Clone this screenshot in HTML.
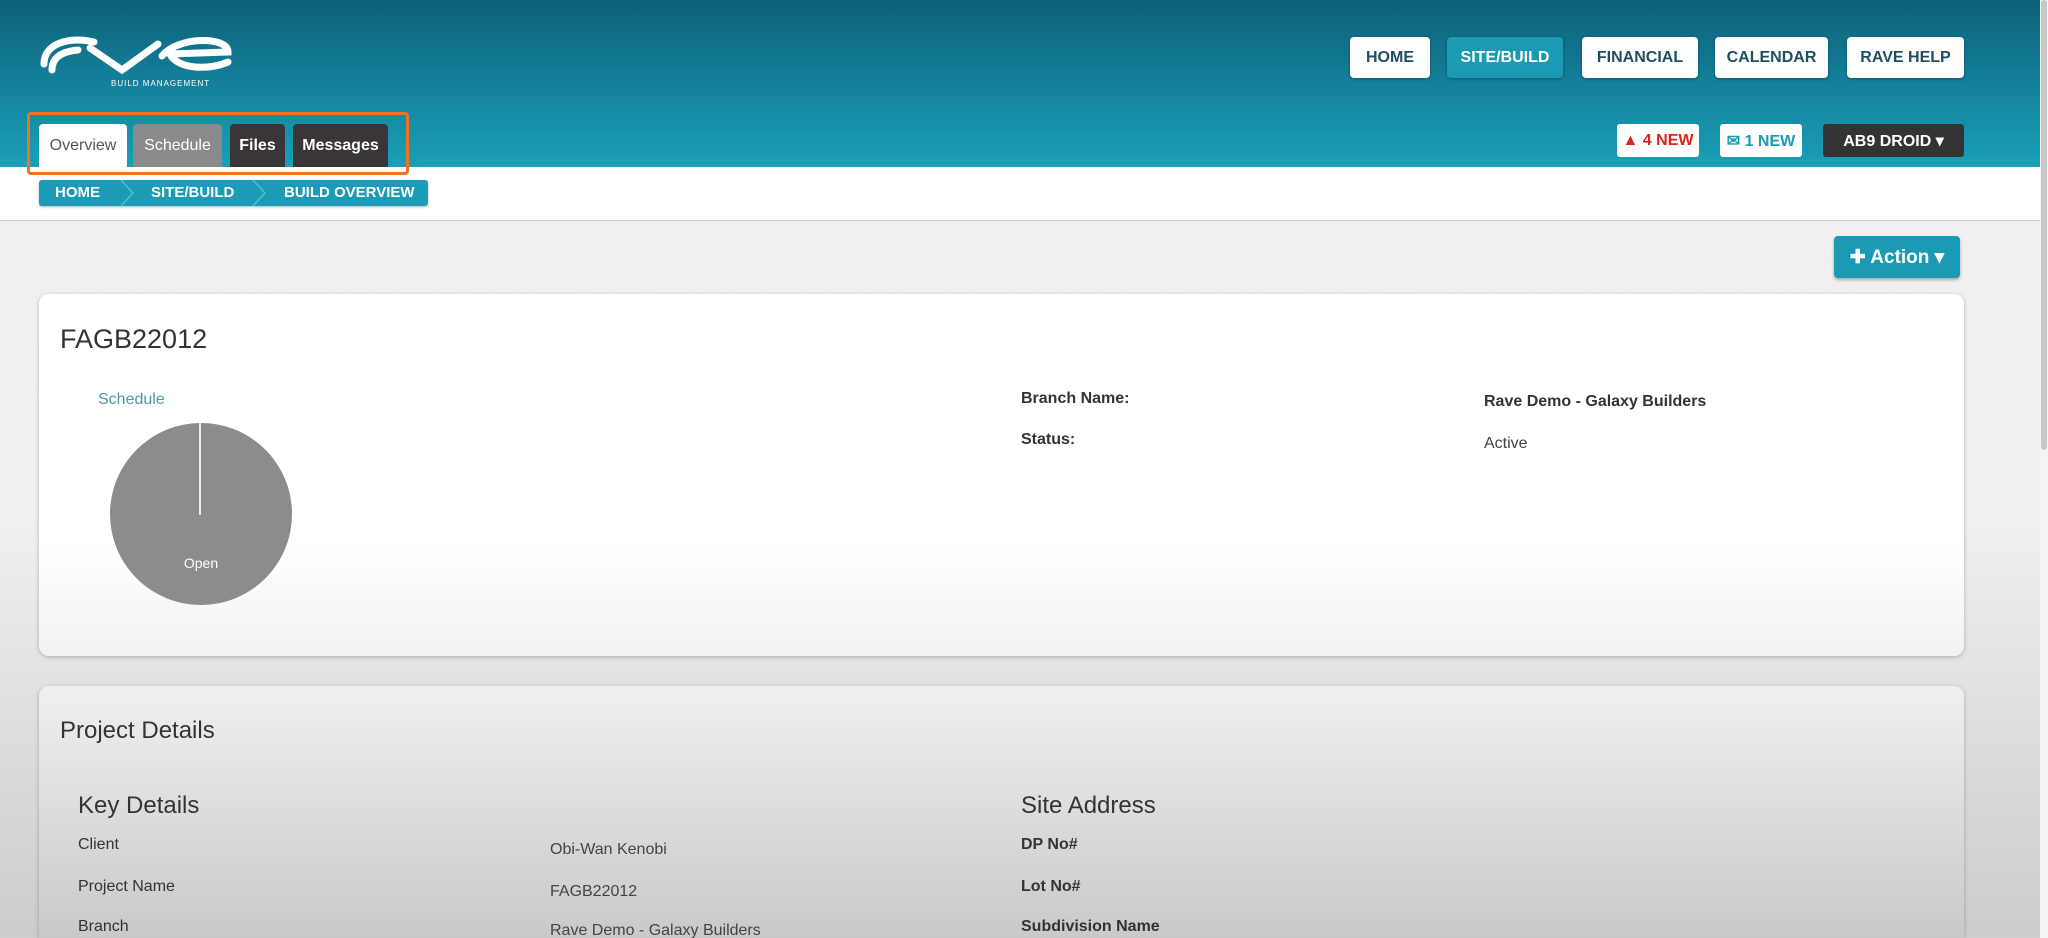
<!DOCTYPE html>
<html style="overflow:hidden"><head><meta charset="utf-8"><style>
*{box-sizing:border-box;margin:0;padding:0}
html,body{width:2048px;height:938px;overflow:hidden}
body{font-family:"Liberation Sans",sans-serif;background:linear-gradient(#f1f1f1 0,#f0f0f0 520px,#cccccc 938px);position:relative}
.abs{position:absolute}
.hdr{left:0;top:0;width:2040px;height:167px;background:linear-gradient(#0e6079 0,#14839d 90px,#1a9fb7 167px)}
.band{left:0;top:167px;width:2040px;height:54px;background:#fff;border-bottom:1px solid #ccc}
.nav{top:37px;height:41px;background:#fff;border-radius:4px;color:#1e4f5c;font-weight:bold;font-size:16px;display:flex;align-items:center;justify-content:center;box-shadow:0 1px 3px rgba(0,0,0,.3)}
.tab{top:124px;height:43px;border-radius:4px 4px 0 0;font-size:16px;display:flex;align-items:center;justify-content:center}
.badge{top:124px;height:33px;border-radius:3px;font-size:16px;font-weight:bold;display:flex;align-items:center;justify-content:center;gap:5px}
.card{left:39px;width:1925px;border-radius:10px;box-shadow:0 1px 4px rgba(0,0,0,.25)}
.t{position:absolute;white-space:nowrap;color:#333}
.b{font-weight:bold}
</style></head><body>
<div class="abs hdr"></div>
<div class="abs band"></div>
<div class="abs" style="right:0;top:0;width:8px;height:938px;background:#f4f4f4"></div>
<div class="abs" style="right:1px;top:0;width:6px;height:450px;background:#c8c8c8;border-radius:3px"></div>
<svg class="abs" style="left:38px;top:30px" width="196" height="60" viewBox="0 0 196 60">
<g fill="none" stroke="#fff" stroke-width="7" stroke-linecap="round">
<path d="M6 34 C6 14 30 6 56 12"/>
<path d="M40 20 C20 22 14 30 14 40"/>
<path d="M52 18 L84 40 L120 14"/>
<path d="M124 26 C140 6 190 6 190 22 L132 24 M132 24 C140 40 172 40 190 32"/>
</g>
<text x="73" y="56" fill="#fff" font-size="8" font-family="Liberation Sans" letter-spacing="1">BUILD MANAGEMENT</text>
</svg>
<div class="abs tab" style="left:39px;width:88px;background:#fff;color:#555">Overview</div>
<div class="abs tab" style="left:133px;width:89px;background:#8a8a8a;color:#fff">Schedule</div>
<div class="abs tab" style="left:230px;width:55px;background:#3a3539;color:#fff;font-weight:bold">Files</div>
<div class="abs tab" style="left:293px;width:95px;background:#3a3539;color:#fff;font-weight:bold">Messages</div>
<div class="abs" style="left:27px;top:112px;width:382px;height:63px;border:3px solid #f07322;border-radius:4px"></div>
<div class="abs" style="left:39px;top:180px;width:389px;height:26px;background:#1b9bb5;border-radius:3px;color:#fff;font-size:15px;font-weight:bold;box-shadow:0 1px 2px rgba(0,0,0,.3)">
<span class="t" style="left:16px;top:4px;color:#fff">HOME</span>
<span class="t" style="left:112px;top:4px;color:#fff">SITE/BUILD</span>
<span class="t" style="left:245px;top:4px;color:#fff">BUILD OVERVIEW</span>
<svg class="abs" style="left:78px;top:0" width="20" height="26"><path d="M4 0 L16 13 L4 26" fill="none" stroke="#4cc0d4" stroke-width="1.5"/></svg>
<svg class="abs" style="left:210px;top:0" width="20" height="26"><path d="M4 0 L16 13 L4 26" fill="none" stroke="#4cc0d4" stroke-width="1.5"/></svg>
</div>
<div class="abs nav" style="left:1350px;width:80px">HOME</div>
<div class="abs nav" style="left:1447px;width:116px;background:#1a9ab3;color:#fff">SITE/BUILD</div>
<div class="abs nav" style="left:1582px;width:116px">FINANCIAL</div>
<div class="abs nav" style="left:1715px;width:113px">CALENDAR</div>
<div class="abs nav" style="left:1847px;width:117px">RAVE HELP</div>
<div class="abs badge" style="left:1617px;width:82px;background:#fff;color:#d9261c">▲ 4 NEW</div>
<div class="abs badge" style="left:1720px;width:82px;background:#fff;color:#1a9ab3">✉ 1 NEW</div>
<div class="abs badge" style="left:1823px;width:141px;background:#333;color:#fff">AB9 DROID ▾</div>
<div class="abs" style="left:1834px;top:236px;width:126px;height:42px;background:#1a9ab3;border-radius:4px;color:#fff;font-size:19px;font-weight:bold;display:flex;align-items:center;justify-content:center;box-shadow:0 2px 3px rgba(0,0,0,.3)">✚ Action ▾</div>
<div class="abs card" style="top:294px;height:362px;background:linear-gradient(#fff 0,#fff 250px,#f2f2f2 362px)">
<span class="t" style="left:21px;top:30px;font-size:27px">FAGB22012</span>
<span class="t" style="left:59px;top:97px;font-size:16px;color:#4a9aa6">Schedule</span>
<svg class="abs" style="left:70px;top:128px" width="184" height="184"><circle cx="92" cy="92" r="91" fill="#8c8c8c"/><line x1="91" y1="1" x2="91" y2="93" stroke="#eee" stroke-width="2"/><text x="92" y="146" fill="#fff" font-size="14" text-anchor="middle" font-family="Liberation Sans">Open</text></svg>
<span class="t b" style="left:982px;top:96px;font-size:16px">Branch Name:</span>
<span class="t b" style="left:982px;top:137px;font-size:16px">Status:</span>
<span class="t b" style="left:1445px;top:99px;font-size:16px">Rave Demo - Galaxy Builders</span>
<span class="t" style="left:1445px;top:141px;font-size:16px;color:#444">Active</span>
</div>
<div class="abs card" style="top:686px;height:252px;border-radius:10px 10px 0 0;background:linear-gradient(#f0f0f0,#c9c9c9)">
<span class="t" style="left:21px;top:31px;font-size:24px">Project Details</span>
<span class="t" style="left:39px;top:106px;font-size:24px">Key Details</span>
<span class="t" style="left:982px;top:106px;font-size:24px">Site Address</span>
<span class="t" style="left:39px;top:150px;font-size:16px">Client</span>
<span class="t" style="left:39px;top:192px;font-size:16px">Project Name</span>
<span class="t" style="left:39px;top:232px;font-size:16px">Branch</span>
<span class="t" style="left:511px;top:155px;font-size:16px;color:#444">Obi-Wan Kenobi</span>
<span class="t" style="left:511px;top:197px;font-size:16px;color:#444">FAGB22012</span>
<span class="t" style="left:511px;top:236px;font-size:16px;color:#444">Rave Demo - Galaxy Builders</span>
<span class="t b" style="left:982px;top:150px;font-size:16px">DP No#</span>
<span class="t b" style="left:982px;top:192px;font-size:16px">Lot No#</span>
<span class="t b" style="left:982px;top:232px;font-size:16px">Subdivision Name</span>
</div>
</body></html>
